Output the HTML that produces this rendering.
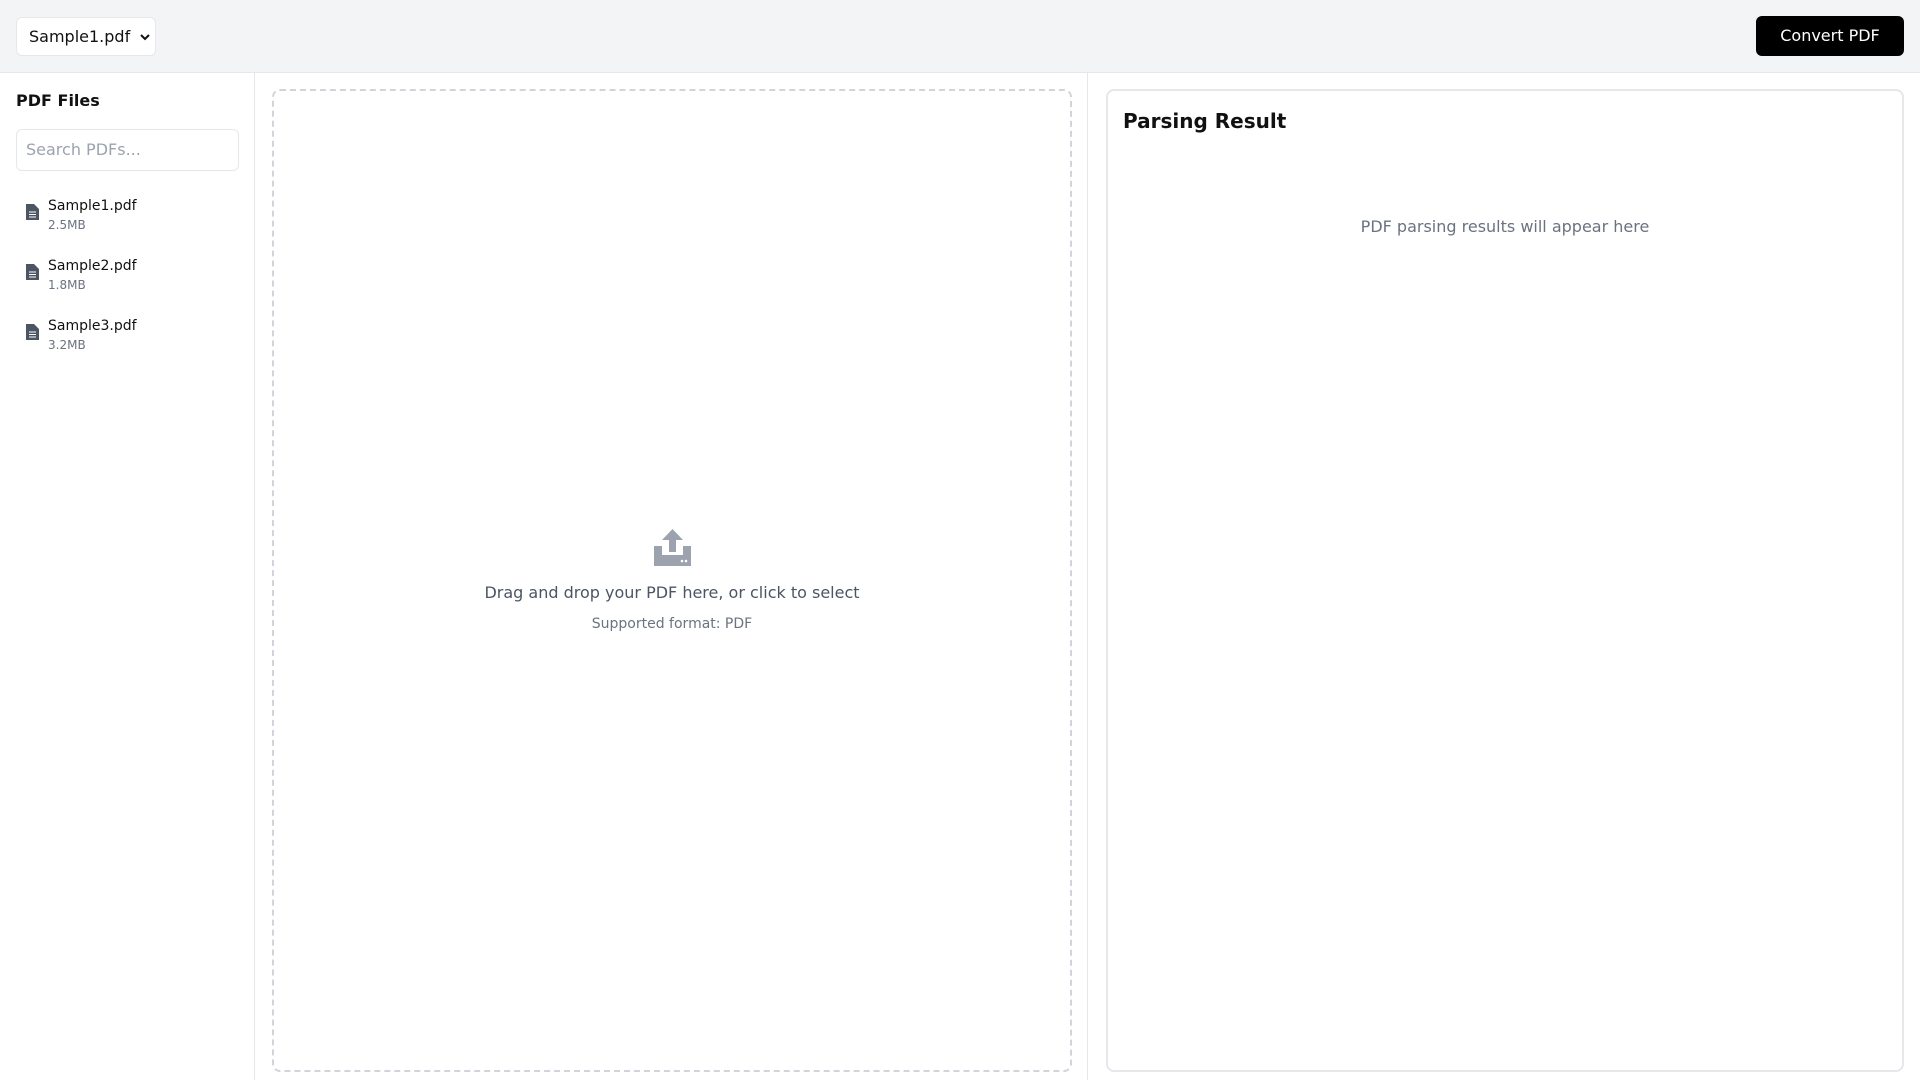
<!DOCTYPE html>
<html><head><style>
*{box-sizing:border-box;margin:0;padding:0}
body{width:1920px;height:1080px;overflow:hidden;font-family:"DejaVu Sans","Liberation Sans",sans-serif;background:#fff;color:#111}
.hdr{height:73px;background:#f3f4f6;border-bottom:1px solid #e5e7eb;position:relative}
.sel{position:absolute;left:16px;top:17px;width:140px;height:39px;background:#fff;border:1px solid #e5e7eb;border-radius:6px;font-size:16px;padding:9px 0 0 12px}
.sel svg{position:absolute;right:5px;top:16px}
.btn{position:absolute;left:1756px;top:16px;width:148px;height:40px;background:#000;color:#fff;border-radius:6px;font-size:16px;text-align:center;line-height:40px}
.side{position:absolute;left:0;top:73px;width:255px;height:1007px;border-right:1px solid #e5e7eb}
.side h2{position:absolute;left:16px;top:18px;font-size:16px;font-weight:bold}
.search{position:absolute;left:16px;top:56px;width:223px;height:42px;border:1px solid #e5e7eb;border-radius:6px;color:#9ca3af;font-size:16px;padding:10px 9px}
.f{position:absolute;left:26px}
.f svg{position:absolute;left:0;top:8px}
.f .n{position:absolute;left:22px;top:2px;font-size:14px;white-space:nowrap}
.f .s{position:absolute;left:22px;top:22px;font-size:12px;color:#6b7280}
.drop{position:absolute;left:272px;top:89px;width:800px;height:983px;border:2px dashed #d1d5db;border-radius:8px}
.res{position:absolute;left:1106px;top:89px;width:798px;height:983px;border:2px solid #e5e7eb;border-radius:8px}
.div{position:absolute;left:1087px;top:73px;width:1px;height:1007px;background:#e5e7eb}
</style></head><body>
<div class="hdr">
<div class="sel">Sample1.pdf<svg width="10" height="7" viewBox="0 0 10 7"><path d="M1 1l4 4 4-4" stroke="#111" stroke-width="2" fill="none"/></svg></div>
<div class="btn">Convert PDF</div>
</div>
<div class="side">
<h2>PDF Files</h2>
<div class="search">Search PDFs...</div>
<div class="f" style="top:123px"><svg width="13" height="16" viewBox="0 0 13 16"><path d="M0 0h8l5 5v11H0z" fill="#4b5563"/><path d="M3 8h7M3 10.5h7M3 13h7" stroke="#fff" stroke-width="1"/></svg><div class="n">Sample1.pdf</div><div class="s">2.5MB</div></div>
<div class="f" style="top:183px"><svg width="13" height="16" viewBox="0 0 13 16"><path d="M0 0h8l5 5v11H0z" fill="#4b5563"/><path d="M3 8h7M3 10.5h7M3 13h7" stroke="#fff" stroke-width="1"/></svg><div class="n">Sample2.pdf</div><div class="s">1.8MB</div></div>
<div class="f" style="top:243px"><svg width="13" height="16" viewBox="0 0 13 16"><path d="M0 0h8l5 5v11H0z" fill="#4b5563"/><path d="M3 8h7M3 10.5h7M3 13h7" stroke="#fff" stroke-width="1"/></svg><div class="n">Sample3.pdf</div><div class="s">3.2MB</div></div>
</div>
<div class="drop">
<svg style="position:absolute;left:380px;top:438px" width="37" height="37" viewBox="0 0 37 37"><path d="M18.5 0L29 11h-7v12h-7V11H8z" fill="#9ca3af"/><path d="M0 17h8v9h21v-9h8v20H0z" fill="#9ca3af"/><circle cx="28" cy="32" r="1.3" fill="#fff"/><circle cx="32" cy="32" r="1.3" fill="#fff"/></svg>
<div style="position:absolute;left:0;right:0;top:492px;text-align:center;font-size:16px;color:#4b5563">Drag and drop your PDF here, or click to select</div>
<div style="position:absolute;left:0;right:0;top:525px;text-align:center;font-size:14px;color:#6b7280">Supported format: PDF</div>
</div>
<div class="div"></div>
<div class="res">
<div style="position:absolute;left:15px;top:18px;font-size:20px;font-weight:bold">Parsing Result</div>
<div style="position:absolute;left:0;right:0;top:126px;text-align:center;font-size:16px;color:#6b7280">PDF parsing results will appear here</div>
</div>
</body></html>
